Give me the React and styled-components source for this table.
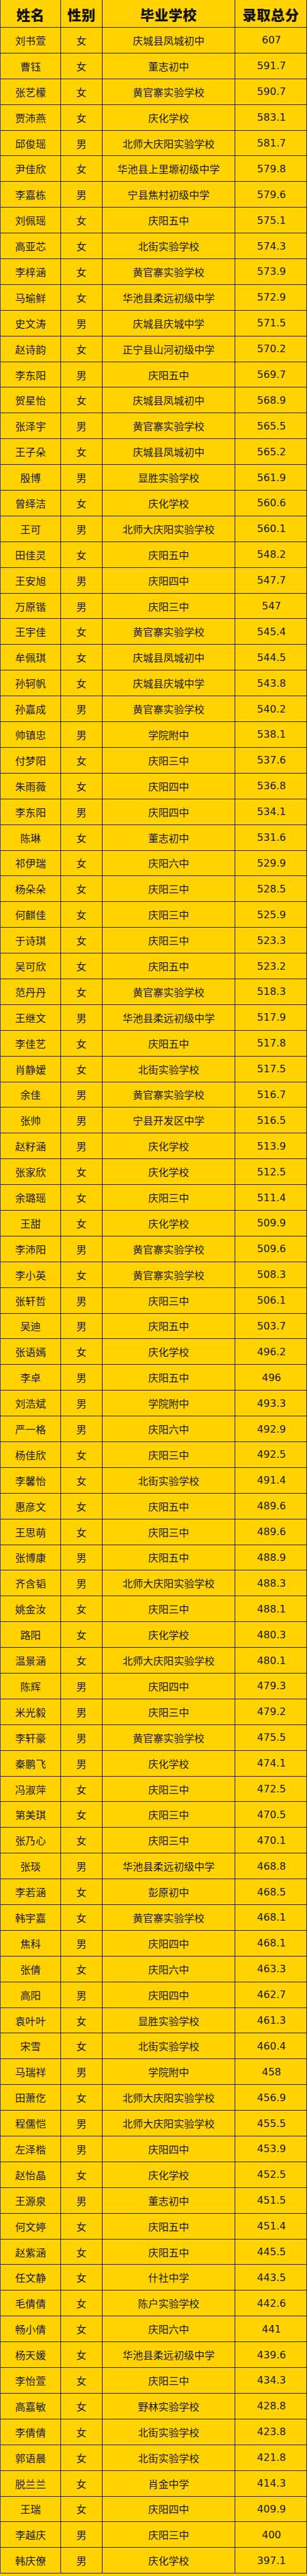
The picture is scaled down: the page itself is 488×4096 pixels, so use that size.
import React from "react";
import styled, { createGlobalStyle } from "styled-components";

const Global = createGlobalStyle`
  html, body { margin: 0; padding: 0; background: #ffd200; }
  #root { width: 488px; }
`;

const RAW = `刘书萱|女|庆城县凤城初中|607
曹钰|女|董志初中|591.7
张艺檬|女|黄官寨实验学校|590.7
贾沛燕|女|庆化学校|583.1
邱俊瑶|男|北师大庆阳实验学校|581.7
尹佳欣|女|华池县上里塬初级中学|579.8
李嘉栋|男|宁县焦村初级中学|579.6
刘佩瑶|女|庆阳五中|575.1
高亚芯|女|北街实验学校|574.3
李梓涵|女|黄官寨实验学校|573.9
马瑜鲜|女|华池县柔远初级中学|572.9
史文涛|男|庆城县庆城中学|571.5
赵诗韵|女|正宁县山河初级中学|570.2
李东阳|男|庆阳五中|569.7
贺星怡|女|庆城县凤城初中|568.9
张泽宇|男|黄官寨实验学校|565.5
王子朵|女|庆城县凤城初中|565.2
殷博|男|显胜实验学校|561.9
曾绎洁|女|庆化学校|560.6
王可|男|北师大庆阳实验学校|560.1
田佳灵|女|庆阳五中|548.2
王安旭|男|庆阳四中|547.7
万原锴|男|庆阳三中|547
王宇佳|女|黄官寨实验学校|545.4
牟佩琪|女|庆城县凤城初中|544.5
孙轲帆|女|庆城县庆城中学|543.8
孙嘉成|男|黄官寨实验学校|540.2
帅镇忠|男|学院附中|538.1
付梦阳|女|庆阳三中|537.6
朱雨薇|女|庆阳四中|536.8
李东阳|男|庆阳四中|534.1
陈琳|女|董志初中|531.6
祁伊瑞|女|庆阳六中|529.9
杨朵朵|女|庆阳三中|528.5
何麒佳|女|庆阳三中|525.9
于诗琪|女|庆阳三中|523.3
吴可欣|女|庆阳五中|523.2
范丹丹|女|黄官寨实验学校|518.3
王继文|男|华池县柔远初级中学|517.9
李佳艺|女|庆阳五中|517.8
肖静嫒|女|北街实验学校|517.5
余佳|男|黄官寨实验学校|516.7
张帅|男|宁县开发区中学|516.5
赵籽涵|男|庆化学校|513.9
张家欣|女|庆化学校|512.5
余璐瑶|女|庆阳三中|511.4
王甜|女|庆化学校|509.9
李沛阳|男|黄官寨实验学校|509.6
李小英|女|黄官寨实验学校|508.3
张轩哲|男|庆阳三中|506.1
吴迪|男|庆阳五中|503.7
张语嫣|女|庆化学校|496.2
李卓|男|庆阳五中|496
刘浩斌|男|学院附中|493.3
严一格|男|庆阳六中|492.9
杨佳欣|女|庆阳三中|492.5
李馨怡|女|北街实验学校|491.4
惠彦文|女|庆阳五中|489.6
王思萌|女|庆阳三中|489.6
张博康|男|庆阳五中|488.9
齐含韬|男|北师大庆阳实验学校|488.3
姚金汝|女|庆阳三中|488.1
路阳|女|庆化学校|480.3
温景涵|女|北师大庆阳实验学校|480.1
陈辉|男|庆阳四中|479.3
米光毅|男|庆阳三中|479.2
李轩豪|男|黄官寨实验学校|475.5
秦鹏飞|男|庆化学校|474.1
冯淑萍|女|庆阳三中|472.5
第美琪|女|庆阳三中|470.5
张乃心|女|庆阳三中|470.1
张琰|男|华池县柔远初级中学|468.8
李若涵|女|彭原初中|468.5
韩宇嘉|女|黄官寨实验学校|468.1
焦科|男|庆阳四中|468.1
张倩|女|庆阳六中|463.3
高阳|男|庆阳四中|462.7
袁叶叶|女|显胜实验学校|461.3
宋雪|女|北街实验学校|460.4
马瑞祥|男|学院附中|458
田萧仡|女|北师大庆阳实验学校|456.9
程儒恺|男|北师大庆阳实验学校|455.5
左泽楷|男|庆阳四中|453.9
赵怡晶|女|庆化学校|452.5
王源泉|男|董志初中|451.5
何文婷|女|庆阳五中|451.4
赵紫涵|女|庆阳五中|445.5
任文静|女|什社中学|443.5
毛倩倩|女|陈户实验学校|442.6
畅小倩|女|庆阳六中|441
杨天媛|女|华池县柔远初级中学|439.6
李怡萱|女|庆阳三中|434.3
高嘉敏|女|野林实验学校|428.8
李倩倩|女|北街实验学校|423.8
郭语晨|女|北街实验学校|421.8
脱兰兰|女|肖金中学|414.3
王瑞|女|庆阳四中|409.9
李越庆|男|庆阳三中|400
韩庆僚|男|庆化学校|397.1`;

const ROWS = RAW.split("\n").map((line) => line.split("|"));

const Sheet = styled.div`
  display: grid;
  grid-template-columns: 96px 66px 211px 1fr;
  grid-template-rows: 44px;
  grid-auto-rows: 40.9px;
  width: 488px;
  box-sizing: border-box;
  background: #ffd200;
  border-left: 1px solid #3a3f5c;
`;

const HeadCell = styled.div`
  display: flex;
  align-items: center;
  justify-content: center;
  box-sizing: border-box;
  border-right: 1px solid #1c1c24;
  border-bottom: 1px solid #1c1c24;
  font-family: "Noto Sans CJK SC", sans-serif;
  font-weight: 900;
  font-size: 22px;
  color: #151515;
  letter-spacing: 0.5px;
`;

const Cell = styled.div`
  display: flex;
  align-items: center;
  justify-content: center;
  box-sizing: border-box;
  border-right: 1px solid #1c1c24;
  border-bottom: 1px solid #1c1c24;
  font-family: ${(p) =>
    p.$num
      ? `"DejaVu Sans", "Noto Sans CJK SC", sans-serif`
      : `"Noto Sans CJK SC", sans-serif`};
  font-size: ${(p) => (p.$num ? "16px" : "16.3px")};
  color: #1a1a1a;
  white-space: nowrap;
  padding-left: ${(p) => (p.$num ? "2px" : "0")};
`;

export default function App() {
  return (
    <>
      <Global />
      <Sheet>
        <HeadCell>姓名</HeadCell>
        <HeadCell>性别</HeadCell>
        <HeadCell>毕业学校</HeadCell>
        <HeadCell>录取总分</HeadCell>
        {ROWS.map(([name, sex, school, score], i) => (
          <React.Fragment key={i}>
            <Cell>{name}</Cell>
            <Cell>{sex}</Cell>
            <Cell>{school}</Cell>
            <Cell $num>{score}</Cell>
          </React.Fragment>
        ))}
      </Sheet>
    </>
  );
}
